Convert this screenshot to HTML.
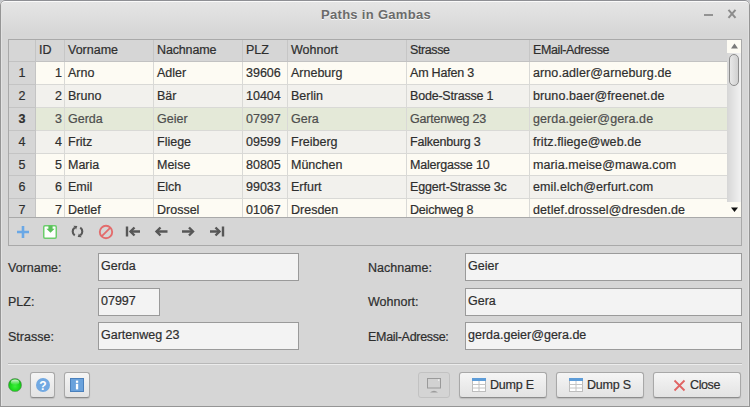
<!DOCTYPE html><html><head><meta charset="utf-8"><style>
*{margin:0;padding:0;box-sizing:border-box}
html,body{width:750px;height:407px;overflow:hidden;background:#c4c6ca}
body{font-family:"Liberation Sans",sans-serif;font-size:12.5px;color:#2e2e2e;position:relative}
.a{position:absolute}
.t{position:absolute;white-space:nowrap;line-height:15px;-webkit-text-stroke:0.2px currentColor}
#win{position:absolute;left:0;top:0;width:750px;height:407px;background:#d6d6d6;border-radius:5px 5px 0 0;overflow:hidden}
#wb{position:absolute;left:0;top:0;width:750px;height:407px;border:1px solid #959595;border-top-color:#8e8f94;border-radius:5px 5px 0 0;box-shadow:inset 0 1px 0 #fafafa,inset 1px 0 0 #e2e2e2,inset -1px 0 0 #e0e0e0}
.btn{position:absolute;top:372px;height:26px;border:1px solid #a8a8a8;border-bottom-color:#8c8c8c;border-radius:3px;background:linear-gradient(#f5f5f5,#e3e3e3);box-shadow:0 1px 1px rgba(0,0,0,.12)}
.inp{position:absolute;height:28px;border:1px solid #9a9a9a;background:#f3f3f3}
</style></head><body>
<div id="win">

<div class="a" style="left:0;top:0;width:750px;height:34px;background:linear-gradient(#e6e6e6,#d6d6d6)"></div>
<div class="t" style="left:321px;top:7px;font-weight:bold;font-size:13px;letter-spacing:.3px;-webkit-text-stroke:0;color:#6b6b6b;text-shadow:0 1px 0 #f8f8f8">Paths in Gambas</div>
<div class="a" style="left:704px;top:14px;width:9px;height:2px;background:#939393"></div>
<svg class="a" style="left:727px;top:8px" width="10" height="12"><path d="M1.5 1.8L8.5 9.8M8.5 1.8L1.5 9.8" stroke="#8c8c8c" stroke-width="2"/></svg>
<div class="a" style="left:8px;top:39px;width:734px;height:207px;border:1px solid #a9a9a9"></div>
<div class="a" style="left:9px;top:40px;width:718px;height:21px;background:#d6d6d6"></div>
<div class="a" style="left:9px;top:62px;width:26px;height:155px;background:#d6d6d6"></div>
<div class="a" style="left:36px;top:62px;width:691px;height:22px;background:#fdfbf3"></div>
<div class="a" style="left:36px;top:84px;width:691px;height:1px;background:#d9d9d6"></div>
<div class="a" style="left:9px;top:84px;width:26px;height:1px;background:#c4c4c4"></div>
<div class="a" style="left:36px;top:85px;width:691px;height:22px;background:#f2f1ed"></div>
<div class="a" style="left:36px;top:107px;width:691px;height:1px;background:#d9d9d6"></div>
<div class="a" style="left:9px;top:107px;width:26px;height:1px;background:#c4c4c4"></div>
<div class="a" style="left:36px;top:108px;width:691px;height:22px;background:#e4e9d8"></div>
<div class="a" style="left:36px;top:130px;width:691px;height:1px;background:#d9d9d6"></div>
<div class="a" style="left:9px;top:130px;width:26px;height:1px;background:#c4c4c4"></div>
<div class="a" style="left:36px;top:131px;width:691px;height:22px;background:#f2f1ed"></div>
<div class="a" style="left:36px;top:153px;width:691px;height:1px;background:#d9d9d6"></div>
<div class="a" style="left:9px;top:153px;width:26px;height:1px;background:#c4c4c4"></div>
<div class="a" style="left:36px;top:154px;width:691px;height:21px;background:#fdfbf3"></div>
<div class="a" style="left:36px;top:175px;width:691px;height:1px;background:#d9d9d6"></div>
<div class="a" style="left:9px;top:175px;width:26px;height:1px;background:#c4c4c4"></div>
<div class="a" style="left:36px;top:176px;width:691px;height:22px;background:#f2f1ed"></div>
<div class="a" style="left:36px;top:198px;width:691px;height:1px;background:#d9d9d6"></div>
<div class="a" style="left:9px;top:198px;width:26px;height:1px;background:#c4c4c4"></div>
<div class="a" style="left:36px;top:199px;width:691px;height:18px;background:#fdfbf3"></div>
<div class="a" style="left:9px;top:61px;width:718px;height:1px;background:#c2c2c2"></div>
<div class="a" style="left:35px;top:40px;width:1px;height:177px;background:#c4c4c4"></div>
<div class="a" style="left:64px;top:40px;width:1px;height:21px;background:#c6c6c6"></div>
<div class="a" style="left:64px;top:62px;width:1px;height:155px;background:#d9d9d6"></div>
<div class="a" style="left:153px;top:40px;width:1px;height:21px;background:#c6c6c6"></div>
<div class="a" style="left:153px;top:62px;width:1px;height:155px;background:#d9d9d6"></div>
<div class="a" style="left:242px;top:40px;width:1px;height:21px;background:#c6c6c6"></div>
<div class="a" style="left:242px;top:62px;width:1px;height:155px;background:#d9d9d6"></div>
<div class="a" style="left:287px;top:40px;width:1px;height:21px;background:#c6c6c6"></div>
<div class="a" style="left:287px;top:62px;width:1px;height:155px;background:#d9d9d6"></div>
<div class="a" style="left:406px;top:40px;width:1px;height:21px;background:#c6c6c6"></div>
<div class="a" style="left:406px;top:62px;width:1px;height:155px;background:#d9d9d6"></div>
<div class="a" style="left:529px;top:40px;width:1px;height:21px;background:#c6c6c6"></div>
<div class="a" style="left:529px;top:62px;width:1px;height:155px;background:#d9d9d6"></div>
<div class="t" style="left:39px;top:43px;letter-spacing:0">ID</div>
<div class="t" style="left:68px;top:43px;letter-spacing:0">Vorname</div>
<div class="t" style="left:157px;top:43px;letter-spacing:-.15px">Nachname</div>
<div class="t" style="left:246px;top:43px;letter-spacing:0">PLZ</div>
<div class="t" style="left:291px;top:43px;letter-spacing:0">Wohnort</div>
<div class="t" style="left:410px;top:43px;letter-spacing:-.4px">Strasse</div>
<div class="t" style="left:533px;top:43px;letter-spacing:-.4px">EMail-Adresse</div>
<div class="t" style="left:9px;top:66px;width:26px;text-align:center;font-weight:normal">1</div>
<div class="t" style="left:36px;top:66px;width:26px;text-align:right;color:#2e2e2e">1</div>
<div class="t" style="left:68px;top:66px;color:#2e2e2e;letter-spacing:0">Arno</div>
<div class="t" style="left:157px;top:66px;color:#2e2e2e;letter-spacing:0">Adler</div>
<div class="t" style="left:246px;top:66px;color:#2e2e2e;letter-spacing:0">39606</div>
<div class="t" style="left:291px;top:66px;color:#2e2e2e;letter-spacing:0">Arneburg</div>
<div class="t" style="left:410px;top:66px;color:#2e2e2e;letter-spacing:-.2px">Am Hafen 3</div>
<div class="t" style="left:533px;top:66px;color:#2e2e2e;letter-spacing:.1px">arno.adler@arneburg.de</div>
<div class="t" style="left:9px;top:89px;width:26px;text-align:center;font-weight:normal">2</div>
<div class="t" style="left:36px;top:89px;width:26px;text-align:right;color:#2e2e2e">2</div>
<div class="t" style="left:68px;top:89px;color:#2e2e2e;letter-spacing:0">Bruno</div>
<div class="t" style="left:157px;top:89px;color:#2e2e2e;letter-spacing:0">Bär</div>
<div class="t" style="left:246px;top:89px;color:#2e2e2e;letter-spacing:0">10404</div>
<div class="t" style="left:291px;top:89px;color:#2e2e2e;letter-spacing:0">Berlin</div>
<div class="t" style="left:410px;top:89px;color:#2e2e2e;letter-spacing:-.2px">Bode-Strasse 1</div>
<div class="t" style="left:533px;top:89px;color:#2e2e2e;letter-spacing:.1px">bruno.baer@freenet.de</div>
<div class="t" style="left:9px;top:112px;width:26px;text-align:center;font-weight:bold">3</div>
<div class="t" style="left:36px;top:112px;width:26px;text-align:right;color:#4d4d4d">3</div>
<div class="t" style="left:68px;top:112px;color:#4d4d4d;letter-spacing:0">Gerda</div>
<div class="t" style="left:157px;top:112px;color:#4d4d4d;letter-spacing:0">Geier</div>
<div class="t" style="left:246px;top:112px;color:#4d4d4d;letter-spacing:0">07997</div>
<div class="t" style="left:291px;top:112px;color:#4d4d4d;letter-spacing:0">Gera</div>
<div class="t" style="left:410px;top:112px;color:#4d4d4d;letter-spacing:-.2px">Gartenweg 23</div>
<div class="t" style="left:533px;top:112px;color:#4d4d4d;letter-spacing:.1px">gerda.geier@gera.de</div>
<div class="t" style="left:9px;top:135px;width:26px;text-align:center;font-weight:normal">4</div>
<div class="t" style="left:36px;top:135px;width:26px;text-align:right;color:#2e2e2e">4</div>
<div class="t" style="left:68px;top:135px;color:#2e2e2e;letter-spacing:0">Fritz</div>
<div class="t" style="left:157px;top:135px;color:#2e2e2e;letter-spacing:0">Fliege</div>
<div class="t" style="left:246px;top:135px;color:#2e2e2e;letter-spacing:0">09599</div>
<div class="t" style="left:291px;top:135px;color:#2e2e2e;letter-spacing:0">Freiberg</div>
<div class="t" style="left:410px;top:135px;color:#2e2e2e;letter-spacing:-.2px">Falkenburg 3</div>
<div class="t" style="left:533px;top:135px;color:#2e2e2e;letter-spacing:.1px">fritz.fliege@web.de</div>
<div class="t" style="left:9px;top:158px;width:26px;text-align:center;font-weight:normal">5</div>
<div class="t" style="left:36px;top:158px;width:26px;text-align:right;color:#2e2e2e">5</div>
<div class="t" style="left:68px;top:158px;color:#2e2e2e;letter-spacing:0">Maria</div>
<div class="t" style="left:157px;top:158px;color:#2e2e2e;letter-spacing:0">Meise</div>
<div class="t" style="left:246px;top:158px;color:#2e2e2e;letter-spacing:0">80805</div>
<div class="t" style="left:291px;top:158px;color:#2e2e2e;letter-spacing:0">München</div>
<div class="t" style="left:410px;top:158px;color:#2e2e2e;letter-spacing:-.2px">Malergasse 10</div>
<div class="t" style="left:533px;top:158px;color:#2e2e2e;letter-spacing:.1px">maria.meise@mawa.com</div>
<div class="t" style="left:9px;top:180px;width:26px;text-align:center;font-weight:normal">6</div>
<div class="t" style="left:36px;top:180px;width:26px;text-align:right;color:#2e2e2e">6</div>
<div class="t" style="left:68px;top:180px;color:#2e2e2e;letter-spacing:0">Emil</div>
<div class="t" style="left:157px;top:180px;color:#2e2e2e;letter-spacing:0">Elch</div>
<div class="t" style="left:246px;top:180px;color:#2e2e2e;letter-spacing:0">99033</div>
<div class="t" style="left:291px;top:180px;color:#2e2e2e;letter-spacing:0">Erfurt</div>
<div class="t" style="left:410px;top:180px;color:#2e2e2e;letter-spacing:-.2px">Eggert-Strasse 3c</div>
<div class="t" style="left:533px;top:180px;color:#2e2e2e;letter-spacing:.1px">emil.elch@erfurt.com</div>
<div class="t" style="left:9px;top:203px;width:26px;text-align:center;font-weight:normal">7</div>
<div class="t" style="left:36px;top:203px;width:26px;text-align:right;color:#2e2e2e">7</div>
<div class="t" style="left:68px;top:203px;color:#2e2e2e;letter-spacing:0">Detlef</div>
<div class="t" style="left:157px;top:203px;color:#2e2e2e;letter-spacing:0">Drossel</div>
<div class="t" style="left:246px;top:203px;color:#2e2e2e;letter-spacing:0">01067</div>
<div class="t" style="left:291px;top:203px;color:#2e2e2e;letter-spacing:0">Dresden</div>
<div class="t" style="left:410px;top:203px;color:#2e2e2e;letter-spacing:-.2px">Deichweg 8</div>
<div class="t" style="left:533px;top:203px;color:#2e2e2e;letter-spacing:.1px">detlef.drossel@dresden.de</div>
<div class="a" style="left:9px;top:217px;width:732px;height:1px;background:#a9a9a9"></div>
<div class="a" style="left:727px;top:40px;width:14px;height:177px;background:#fdfbf3"></div>
<div class="a" style="left:727px;top:53px;width:14px;height:149px;background:linear-gradient(90deg,#d6d6d6,#f2f2f2)"></div>
<div class="a" style="left:729px;top:54px;width:10px;height:32px;border:1px solid #8c8c8c;border-radius:5px;background:linear-gradient(90deg,#e8e8e8,#d0d0d0)"></div>
<svg class="a" style="left:731px;top:43px" width="7" height="6"><path d="M0 5.6 L3.5 0.6 L7 5.6Z" fill="#7a7a7a"/></svg>
<svg class="a" style="left:731px;top:207px" width="7" height="6"><path d="M0 0.5 L3.5 5 L7 0.5Z" fill="#111"/></svg>
<svg class="a" style="left:16px;top:225px" width="14" height="14"><path d="M7 1V13M1 7H13" stroke="#6aa8e6" stroke-width="2.6"/></svg>
<svg class="a" style="left:43px;top:225px" width="15" height="14"><rect x="0.75" y="0.75" width="12.5" height="12.5" rx="1.2" fill="#fff" stroke="#6ccd6c" stroke-width="1.5"/><path d="M5.4 0.5H9.6V3.8H11.6L7.5 7.8L3.4 3.8H5.4Z" fill="#5bc15b"/></svg>
<svg class="a" style="left:71px;top:225px" width="14" height="14"><path d="M3.75 2.57A4.8 4.8 0 0 0 3.75 10.43" stroke="#585858" stroke-width="2.1" fill="none"/><path d="M2.4 0.8L6.3 0.9L5.1 4.4Z" fill="#585858"/><path d="M9.25 2.57A4.8 4.8 0 0 1 9.25 10.43" stroke="#585858" stroke-width="2.1" fill="none"/><path d="M10.6 12.2L6.7 12.1L7.9 8.6Z" fill="#585858"/></svg>
<svg class="a" style="left:98px;top:224px" width="16" height="16"><circle cx="8" cy="8" r="6.2" stroke="#e36c6c" stroke-width="1.9" fill="none"/><path d="M3.6 12.4L12.4 3.6" stroke="#e36c6c" stroke-width="1.8"/></svg>
<svg class="a" style="left:125px;top:225px" width="16" height="13"><path d="M2 1.5V11.5" stroke="#575757" stroke-width="2.4"/><path d="M5.5 6.5H15" stroke="#575757" stroke-width="2.6"/><path d="M9.5 2.5L5.5 6.5L9.5 10.5" stroke="#575757" stroke-width="2.4" fill="none"/></svg>
<svg class="a" style="left:154px;top:225px" width="15" height="13"><path d="M2.5 6.5H13.5" stroke="#575757" stroke-width="2.6"/><path d="M6.5 2.5L2.5 6.5L6.5 10.5" stroke="#575757" stroke-width="2.4" fill="none"/></svg>
<svg class="a" style="left:181px;top:225px" width="15" height="13"><path d="M1 6.5H12" stroke="#575757" stroke-width="2.6"/><path d="M8 2.5L12 6.5L8 10.5" stroke="#575757" stroke-width="2.4" fill="none"/></svg>
<svg class="a" style="left:209px;top:225px" width="16" height="13"><path d="M1 6.5H10.5" stroke="#575757" stroke-width="2.6"/><path d="M6.5 2.5L10.5 6.5L6.5 10.5" stroke="#575757" stroke-width="2.4" fill="none"/><path d="M14 1.5V11.5" stroke="#575757" stroke-width="2.4"/></svg>
<div class="t" style="left:8px;top:261px">Vorname:</div>
<div class="inp" style="left:98px;top:253px;width:201px"><div class="t" style="left:2px;top:5px">Gerda</div></div>
<div class="t" style="left:8px;top:295px">PLZ:</div>
<div class="inp" style="left:98px;top:288px;width:62px"><div class="t" style="left:2px;top:5px">07997</div></div>
<div class="t" style="left:8px;top:330px">Strasse:</div>
<div class="inp" style="left:98px;top:322px;width:201px"><div class="t" style="left:2px;top:5px">Gartenweg 23</div></div>
<div class="t" style="left:368px;top:261px">Nachname:</div>
<div class="inp" style="left:465px;top:253px;width:277px"><div class="t" style="left:2px;top:5px">Geier</div></div>
<div class="t" style="left:368px;top:295px">Wohnort:</div>
<div class="inp" style="left:465px;top:288px;width:277px"><div class="t" style="left:2px;top:5px">Gera</div></div>
<div class="t" style="left:368px;top:330px"><span style="letter-spacing:-.3px">EMail-Adresse:</span></div>
<div class="inp" style="left:465px;top:322px;width:277px"><div class="t" style="left:2px;top:5px">gerda.geier@gera.de</div></div>
<div class="a" style="left:8px;top:363px;width:734px;height:1px;background:#b8b8b8"></div>
<div class="a" style="left:8px;top:364px;width:734px;height:1px;background:#ececec"></div>
<svg class="a" style="left:8px;top:378px" width="14" height="14"><defs><radialGradient id="lg" cx="50%" cy="60%" r="55%"><stop offset="0" stop-color="#3cf03c"/><stop offset="0.7" stop-color="#18d418"/><stop offset="1" stop-color="#10b010"/></radialGradient><linearGradient id="lh" x1="0" y1="0" x2="0" y2="1"><stop offset="0" stop-color="#ffffff" stop-opacity=".85"/><stop offset="1" stop-color="#ffffff" stop-opacity="0"/></linearGradient></defs><circle cx="7" cy="7" r="6.6" fill="url(#lg)" stroke="#6a8a6a" stroke-width=".6"/><ellipse cx="7" cy="4.2" rx="4.2" ry="2.8" fill="url(#lh)"/></svg>
<div class="btn" style="left:30px;width:25px"><svg class="a" style="left:4px;top:4px" width="16" height="16"><circle cx="8" cy="8" r="7" fill="#72a9e2"/><text x="8" y="12.6" text-anchor="middle" font-family="Liberation Sans" font-weight="bold" font-size="12" fill="#fff">?</text></svg></div>
<div class="btn" style="left:64px;width:26px"><svg class="a" style="left:5px;top:5px" width="14" height="14"><rect x="0.5" y="0.5" width="13" height="13" fill="#6aa2dc" stroke="#4a80bc"/><rect x="5.9" y="5.8" width="2.3" height="5.6" fill="#fff"/><rect x="5.9" y="2.6" width="2.3" height="2.2" fill="#fff"/></svg></div>
<div class="a" style="left:418px;top:372px;width:32px;height:26px;border:1px solid #c2c2c2;border-radius:3px;background:#d4d4d4"><svg class="a" style="left:7px;top:5px" width="16" height="16"><rect x="1.5" y="0.5" width="13" height="9.5" fill="#d2d2d2" stroke="#9a9a9a" stroke-width="1"/><rect x="12" y="1.5" width="1.3" height="1.3" fill="#f4f4f4"/><path d="M4 14.5Q8 11 12 14.5Z" fill="#9c9c9c"/></svg></div>
<div class="btn" style="left:459px;width:88px"><svg class="a" style="left:12px;top:5px" width="15" height="14"><rect x="0.5" y="0.5" width="13" height="13" fill="#fff" stroke="#bdbdbd"/><rect x="0" y="0" width="14" height="3" fill="#5d9cd8"/><path d="M0.5 6.5H13.5M0.5 10H13.5M7 3V13.5" stroke="#c4c4c4"/></svg><div class="t" style="left:30px;top:5px;letter-spacing:-.2px">Dump E</div></div>
<div class="btn" style="left:556px;width:88px"><svg class="a" style="left:12px;top:5px" width="15" height="14"><rect x="0.5" y="0.5" width="13" height="13" fill="#fff" stroke="#bdbdbd"/><rect x="0" y="0" width="14" height="3" fill="#5d9cd8"/><path d="M0.5 6.5H13.5M0.5 10H13.5M7 3V13.5" stroke="#c4c4c4"/></svg><div class="t" style="left:30px;top:5px;letter-spacing:-.2px">Dump S</div></div>
<div class="btn" style="left:653px;width:88px"><svg class="a" style="left:19px;top:6px" width="13" height="13"><path d="M1.5 1.5L11.5 11.5M11.5 1.5L1.5 11.5" stroke="#e06464" stroke-width="1.8"/></svg><div class="t" style="left:36px;top:5px;letter-spacing:-.4px">Close</div></div>
<div id="wb"></div>
</div></body></html>
